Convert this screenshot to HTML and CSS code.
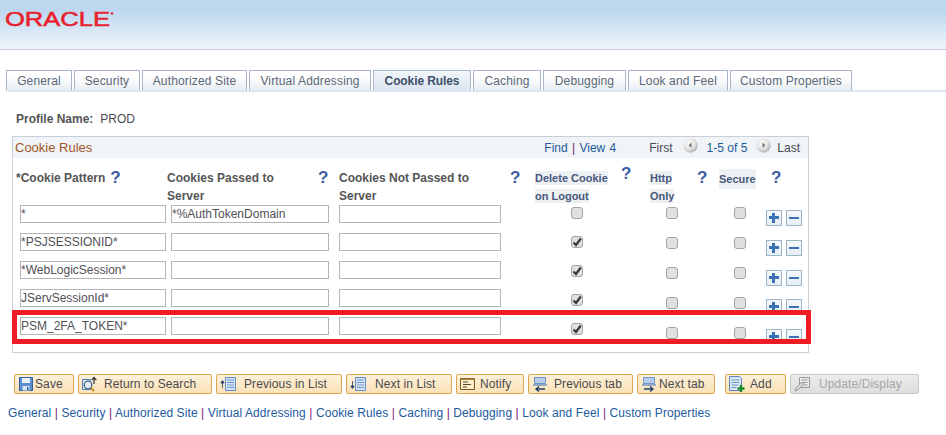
FILE: index.html
```html
<!DOCTYPE html>
<html lang="en">
<head>
<meta charset="utf-8">
<title>Cookie Rules</title>
<link rel="stylesheet" href="styles.css">
</head>
<body>
<header class="banner">
  <svg class="logo" width="112" height="20" viewBox="0 0 112 20"><text class="logo-text" x="0" y="17" textLength="105" lengthAdjust="spacingAndGlyphs">ORACLE</text><circle cx="107" cy="4.500" r="1.200" fill="#e8212d"/></svg>
</header>
<nav class="tabs">
  <a class="tab t-66">General</a><a class="tab t-66">Security</a><a class="tab t-105">Authorized Site</a><a class="tab t-122">Virtual Addressing</a><a class="tab t-98 active">Cookie Rules</a><a class="tab t-68">Caching</a><a class="tab t-83">Debugging</a><a class="tab t-100">Look and Feel</a><a class="tab t-122">Custom Properties</a>
</nav>
<div class="profile"><b>Profile Name:</b><span>PROD</span></div>
<section class="box">
  <div class="box-head">
    <span class="box-title">Cookie Rules</span>
    <div class="pager">
      <span class="find">Find <i>|</i> View 4</span>
      <span class="first">First</span>
      <svg class="nav" width="15" height="15" viewBox="0 0 15 15"><defs><radialGradient id="sphere" cx=".4" cy=".35" r=".7"><stop offset="0" stop-color="#fbfbfb"/><stop offset=".55" stop-color="#e6e6e6"/><stop offset="1" stop-color="#a8a8a8"/></radialGradient></defs><circle cx="7.500" cy="7.500" r="7.200" fill="url(#sphere)"/><path d="M8.500 4.500v5.500L5.500 7.200z" fill="#777"/></svg>
      <span class="range">1-5 of 5</span>
      <svg class="nav" width="15" height="15" viewBox="0 0 15 15"><circle cx="7.500" cy="7.500" r="7.200" fill="url(#sphere)"/><path d="M6.500 4.500v5.500L9.500 7.200z" fill="#777"/></svg>
      <span class="last">Last</span>
    </div>
  </div>
  <div class="grid">
    <div class="th c1"><b class="w-auto">*Cookie Pattern</b><span class="q">?</span></div>
    <div class="th c2"><b class="w2">Cookies Passed to<br>Server</b><span class="q">?</span></div>
    <div class="th c3"><b class="w3">Cookies Not Passed to<br>Server</b><span class="q">?</span></div>
    <div class="th c4"><div class="w4"><a class="sort">Delete Cookie</a><br><a class="sort">on Logout</a></div><span class="q q-up">?</span></div>
    <div class="th c5"><div class="w5"><a class="sort">Http</a><br><a class="sort">Only</a></div><span class="q">?</span></div>
    <div class="th c6"><a class="sort">Secure</a></div>
    <div class="th c7"><span class="q">?</span></div>

    <div class="col inputs c1-b">
      <input class="w-a" value="*"><input class="w-a" value="*PSJSESSIONID*"><input class="w-a" value="*WebLogicSession*"><input class="w-a" value="JServSessionId*"><input class="w-a" value="PSM_2FA_TOKEN*">
    </div>
    <div class="col inputs c2-b">
      <input class="w-b" value="*%AuthTokenDomain"><input class="w-b"><input class="w-b"><input class="w-b"><input class="w-b">
    </div>
    <div class="col inputs c2-b">
      <input class="w-c"><input class="w-c"><input class="w-c"><input class="w-c"><input class="w-c">
    </div>
    <div class="col checks del">
      <span class="cb"></span>
      <span class="cb"><svg width="10" height="10" viewBox="0 0 10 10"><path d="M1.500 5.500 4 8l4.800-6.500" fill="none" stroke="#3a3a3a" stroke-width="2.200"/></svg></span>
      <span class="cb"><svg width="10" height="10" viewBox="0 0 10 10"><path d="M1.500 5.500 4 8l4.800-6.500" fill="none" stroke="#3a3a3a" stroke-width="2.200"/></svg></span>
      <span class="cb"><svg width="10" height="10" viewBox="0 0 10 10"><path d="M1.500 5.500 4 8l4.800-6.500" fill="none" stroke="#3a3a3a" stroke-width="2.200"/></svg></span>
      <span class="cb"><svg width="10" height="10" viewBox="0 0 10 10"><path d="M1.500 5.500 4 8l4.800-6.500" fill="none" stroke="#3a3a3a" stroke-width="2.200"/></svg></span>
    </div>
    <div class="col checks http"><span class="cb"></span><span class="cb"></span><span class="cb"></span><span class="cb"></span><span class="cb"></span></div>
    <div class="col checks sec"><span class="cb"></span><span class="cb"></span><span class="cb"></span><span class="cb"></span><span class="cb"></span></div>
    <div class="col acts">
      <div class="act"><span class="pm plus"></span><span class="pm minus"></span></div>
      <div class="act"><span class="pm plus"></span><span class="pm minus"></span></div>
      <div class="act"><span class="pm plus"></span><span class="pm minus"></span></div>
      <div class="act"><span class="pm plus"></span><span class="pm minus"></span></div>
      <div class="act"><span class="pm plus"></span><span class="pm minus"></span></div>
    </div>
  </div>
  <div class="highlight"></div>
</section>
<div class="toolbar">
  <button class="btn b-save"><svg width="16" height="16" viewBox="0 0 16 16"><path d="M1.500 1.500h13v13h-13z" fill="#5b8fd0" stroke="#2f5f9f"/><path d="M4 2h8v5H4z" fill="#eef4fb"/><path d="M4.500 10h7v4.500h-7z" fill="#d8e4f2"/><path d="M9 11h1.500v3H9z" fill="#2f5f9f"/></svg>Save</button>
  <button class="btn b-return"><svg width="16" height="16" viewBox="0 0 16 16"><path d="M.5 3.500h8v10h-8z" fill="#e6eef8" stroke="#4f7fb8"/><circle cx="6" cy="9" r="3.800" fill="#dfeaf5" stroke="#4a6a8a" stroke-width="1.300"/><path d="m9 12 3 3" stroke="#c09020" stroke-width="2"/><path d="M12 8V2M9.800 4 12 1.500 14.300 4" fill="none" stroke="#333" stroke-width="1.200"/></svg>Return to Search</button>
  <button class="btn b-prev"><svg width="16" height="16" viewBox="0 0 16 16"><path d="M5.500 1.500h10v13h-10z" fill="#d5e3f4" stroke="#5f8cc6"/><path d="M7 4h7M7 6.500h7M7 9h7M7 11.500h7" stroke="#6f98cc"/><path d="M2.500 12V5M.8 7 2.500 4.500 4.200 7z" fill="#1f3f6f" stroke="#1f3f6f" stroke-width=".8"/></svg>Previous in List</button>
  <button class="btn b-next"><svg width="16" height="16" viewBox="0 0 16 16"><path d="M5.500 1.500h10v13h-10z" fill="#d5e3f4" stroke="#5f8cc6"/><path d="M7 4h7M7 6.500h7M7 9h7M7 11.500h7" stroke="#6f98cc"/><path d="M2.500 5v7M.8 10 2.500 12.500 4.200 10z" fill="#1f3f6f" stroke="#1f3f6f" stroke-width=".8"/></svg>Next in List</button>
  <button class="btn b-notify"><svg width="16" height="16" viewBox="0 0 16 16"><path d="M.5 2.500h14v11H.5z" fill="#fbeecb" stroke="#7a5a20"/><path d="M.5 2.500h14v1.500H.5z" fill="#a88040"/><path d="M3 6h5M3 8.500h8M3 11h4" stroke="#5a4520" stroke-width="1.200"/></svg>Notify</button>
  <button class="btn b-ptab"><svg width="16" height="16" viewBox="0 0 16 16"><path d="M2.500 1.500h11v6h-11z" fill="#b7cdec" stroke="#6f94c9"/><path d="M1 9h14" stroke="#6f94c9" stroke-width="1.500"/><path d="M13 13H4M7 10.500 4 13l3 2.500" fill="none" stroke="#1f3f6f" stroke-width="1.400"/></svg>Previous tab</button>
  <button class="btn b-ntab"><svg width="16" height="16" viewBox="0 0 16 16"><path d="M2.500 1.500h11v6h-11z" fill="#b7cdec" stroke="#6f94c9"/><path d="M1 9h14" stroke="#6f94c9" stroke-width="1.500"/><path d="M3 13h9M9 10.500l3 2.500-3 2.500" fill="none" stroke="#1f3f6f" stroke-width="1.400"/></svg>Next tab</button>
  <button class="btn b-add"><svg width="16" height="16" viewBox="0 0 16 16"><path d="M.5.500h10l2 2v12H.5z" fill="#dbe7f7" stroke="#5a86c4"/><path d="M2.500 4h8M2.500 6.500h8M2.500 9h7M2.500 11.500h5" stroke="#6f98cc"/><path d="M12 9v7M8.500 12.500h7" stroke="#1f8a2a" stroke-width="2.400"/></svg>Add</button>
  <button class="btn b-update" disabled><svg width="16" height="16" viewBox="0 0 16 16"><path d="M5.500 1.500h10v10h-10z" fill="#ececec" stroke="#9a9a9a"/><path d="M7.500 4h6M9 6.500h4.500M10 9h3.500" stroke="#9a9a9a"/><path d="m1 15 1-3 6-6 2 2-6 6z" fill="#d8d8d8" stroke="#9a9a9a"/></svg>Update/Display</button>
</div>
<nav class="links">
  <a>General</a> <i>|</i> <a>Security</a> <i>|</i> <a>Authorized Site</a> <i>|</i> <a>Virtual Addressing</a> <i>|</i> <a>Cookie Rules</a> <i>|</i> <a>Caching</a> <i>|</i> <a>Debugging</a> <i>|</i> <a>Look and Feel</a> <i>|</i> <a>Custom Properties</a>
</nav>
</body>
</html>
```
FILE: styles.css
```css
* { box-sizing: border-box; }
body {
  margin: 0;
  background: #fff;
  font-family: "Liberation Sans", Arial, sans-serif;
  font-size: 12px;
  color: #4a4a4f;
}
.banner {
  height: 50px;
  border-bottom: 1px solid #c6ccd6;
  background: linear-gradient(#bdd7ef 0, #bdd7ef 10px, #f0f6fc 49px);
  padding: 9px 0 0 5px;
}
.logo { display: block; }
.logo-text {
  font-family: "Liberation Sans", Arial, sans-serif;
  font-size: 19.500px;
  font-weight: normal;
  fill: #e8212d;
  stroke: #e8212d;
  stroke-width: .5px;
}
.tabs {
  display: flex;
  gap: 2px;
  margin-top: 20px;
  margin-left: 6px;
  height: 22px;
  border-bottom: 2px solid #dbe6f4;
}
.tab {
  flex: none;
  height: 20px;
  line-height: 20px;
  text-align: center;
  border: 1px solid #a9b6c9;
  border-bottom: 0;
  background: linear-gradient(#fff, #fff 30%, #e9edf1);
  color: #5a6878;
  letter-spacing: .15px;
}
.t-66 { width: 66px; }
.t-68 { width: 68px; }
.t-83 { width: 83px; }
.t-98 { width: 98px; }
.t-100 { width: 100px; }
.t-105 { width: 105px; }
.t-122 { width: 122px; }
.tab.active {
  background: linear-gradient(#f2f6fa, #dbe5f1);
  font-weight: bold;
  color: #3f5068;
  letter-spacing: -.1px;
}
.profile {
  display: flex;
  gap: 7px;
  margin: 19px 0 0 16px;
  line-height: 16px;
}
.profile b { color: #555; }
.box {
  position: relative;
  width: 797px;
  margin: 9px 0 0 12px;
  border: 1px solid #c8cfd8;
}
.box-head {
  display: flex;
  align-items: center;
  justify-content: space-between;
  height: 21px;
  padding: 0 8px 0 2px;
  background: #f0f4f6;
}
.box-title { font-size: 13px; color: #a0562a; }
.pager { display: flex; align-items: center; }
.find { color: #1d5a9e; word-spacing: 1px; margin-right: 33px; }
.find i { font-style: normal; color: #6a2a7a; }
.first { color: #4a4a5a; margin-right: 10px; }
.nav { display: block; margin-top: -5px; }
.range { color: #1d5a9e; margin: 0 9px; }
.last { color: #4a4a5a; margin-left: 6px; }
.grid {
  display: grid;
  grid-template-columns: 154px 168px 195px 115px 70px 45px 48px;
  grid-template-rows: 47px 139px;
  margin-bottom: 8px;
  overflow: hidden;
}
.th { display: flex; align-items: flex-start; padding-top: 11px; line-height: 18px; }
.th b { color: #555; }
.c1 { padding-left: 3px; }
.c3 { padding-left: 4px; }
.c4, .c5 { padding-left: 5px; }
.c6 { padding-left: 4px; }
.c7 { padding-left: 11px; }
.w-auto { margin-right: 5px; }
.w2 { width: 151px; }
.w3 { width: 171px; }
.w4 { width: 86px; }
.w5 { width: 47px; }
.sort {
  font-size: 11px;
  font-weight: bold;
  color: #47587c;
  background: #eef1f4;
  padding: 1px 0;
}
.q {
  font-size: 17px;
  font-weight: bold;
  line-height: 18px;
  color: #3b5ba5;
}
.q-up { margin-top: -4px; }
.col { display: flex; flex-direction: column; overflow: hidden; }
.inputs { gap: 10px; }
.inputs input {
  display: block;
  height: 18px;
  padding: 0;
  border: 1px solid #b5b5b5;
  background: #fff;
  font: 12px "Liberation Sans", Arial, sans-serif;
  color: #505055;
  outline: 0;
}
.c1-b { padding-left: 7px; }
.c2-b { padding-left: 4px; }
.w-a { width: 146px; }
.w-b { width: 158px; }
.w-c { width: 162px; }
.checks { padding-top: 2px; }
.del { padding-left: 41px; gap: 17px; }
.http { padding-left: 21px; gap: 18px; }
.sec { padding-left: 19px; gap: 18px; }
.cb {
  display: flex;
  align-items: center;
  justify-content: center;
  flex: none;
  width: 12px;
  height: 12px;
  border: 1px solid #a4a4a4;
  border-radius: 3px;
  background: #e0e0e0;
}
.acts { padding: 5px 0 0 6px; gap: 13.750px; }
.act { display: flex; gap: 4px; flex: none; }
.pm {
  position: relative;
  width: 16px;
  height: 16px;
  border: 1px solid #9cb6c8;
  background: linear-gradient(#f4f8fb, #e6eff5);
}
.pm::before, .plus::after {
  content: "";
  position: absolute;
  background: #3a72b5;
}
.pm::before { left: 2px; right: 2px; top: 6px; height: 2px; }
.plus::before { top: 5px; height: 3px; }
.plus::after { top: 2px; bottom: 2px; left: 5px; width: 3px; }
.highlight {
  position: absolute;
  left: -1px;
  top: 173px;
  width: 799px;
  height: 34px;
  border: 5px solid #ee1c25;
}
.toolbar {
  display: flex;
  gap: 4px;
  margin: 21px 0 0 14px;
}
.btn {
  display: flex;
  align-items: center;
  height: 20px;
  padding: 0 0 0 3px;
  border: 1px solid #dea552;
  border-radius: 2px;
  background: linear-gradient(#fdf1da, #fbe1b6);
  font: 12px "Liberation Sans", Arial, sans-serif;
  color: #4a4a4f;
  letter-spacing: .1px;
  white-space: nowrap;
}
.btn svg { flex: none; }
.b-save { width: 60px; gap: 1px; }
.b-return { width: 134px; gap: 6px; }
.b-prev { width: 126px; gap: 8px; }
.b-next { width: 106px; gap: 9px; }
.b-notify { width: 68px; gap: 4px; }
.b-ptab { width: 105px; gap: 6px; }
.b-ntab { width: 78px; gap: 2px; }
.b-add { width: 61px; gap: 5px; margin-left: 6px; }
.b-update { width: 129px; gap: 9px; border-color: #c8c8c8; background: linear-gradient(#ececec, #dedede); color: #a6a6a6; }
.links { margin: 12px 0 0 8px; line-height: 14px; color: #1d5a9e; letter-spacing: .09px; }
.links i { font-style: normal; color: #7a1a7a; }
```
